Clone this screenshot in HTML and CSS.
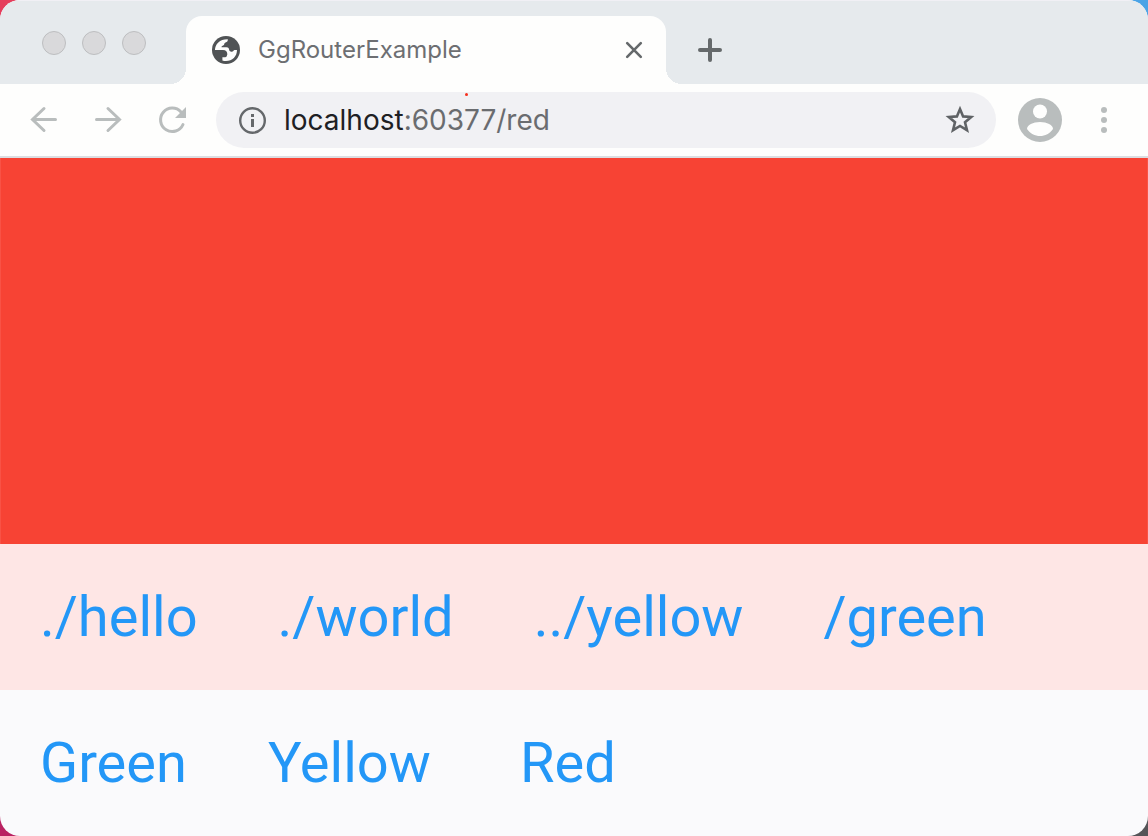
FILE: index.html
```html
<!DOCTYPE html>
<html lang="en">
<head>
<meta charset="utf-8">
<title>GgRouterExample</title>
<link rel="stylesheet" href="styles.css">
</head>
<body>
<div class="window">
  <header class="tabstrip">
    <div class="lights">
      <button class="light" aria-label="Close window"></button>
      <button class="light" aria-label="Minimize window"></button>
      <button class="light" aria-label="Zoom window"></button>
    </div>
    <div class="tab">
      <svg class="globe" viewBox="0 0 28 28" aria-hidden="true">
        <circle cx="14" cy="14" r="14" fill="#505355"/>
        <path fill="#fefefd" d="M3 14C3 8 8 3 15.800 3.200C16 5 15 6.200 13.500 6.400C12 6.600 12.600 8.500 11.500 9.300C10.300 10 9.500 10 9.500 11.200H14.500C16.500 11.200 17 12.500 17.200 14C17.500 15.500 19 16 20.500 15.500C21.500 15.200 21.500 14 22.500 14H25C25 20.500 20.300 25 14 25C12.700 25 11.500 24.800 10.400 24.400V21.200H13C14.800 21.200 15 19.500 15.300 18.500C15.500 16 14 14 11 14Z"/>
      </svg>
      <span class="title">GgRouterExample</span>
      <button class="icon-button close" aria-label="Close tab">
        <svg width="20" height="20" viewBox="0 0 20 20"><path d="M3.200 3.200L16.800 16.800M16.800 3.200L3.200 16.800" stroke="#65696b" stroke-width="2.600" stroke-linecap="round"/></svg>
      </button>
    </div>
    <button class="icon-button add" aria-label="New tab">
      <svg width="28" height="28" viewBox="0 0 28 28"><path d="M14 4V24M4 14H24" stroke="#65696b" stroke-width="4" stroke-linecap="round"/></svg>
    </button>
  </header>
  <div class="toolbar">
    <nav class="controls" aria-label="History">
      <button class="icon-button" aria-label="Back">
        <svg width="32" height="32" viewBox="0 0 32 32"><path d="M27.500 15.500H4.500M16 4.500L4.500 15.500L16 26.500" fill="none" stroke="#b9bdbd" stroke-width="3" stroke-linecap="round"/></svg>
      </button>
      <button class="icon-button" aria-label="Forward">
        <svg width="32" height="32" viewBox="0 0 32 32"><path d="M4.500 15.500H27.500M16 4.500L27.500 15.500L16 26.500" fill="none" stroke="#b9bdbd" stroke-width="3" stroke-linecap="round"/></svg>
      </button>
      <button class="icon-button" aria-label="Reload">
        <svg width="32" height="32" viewBox="0 0 32 32"><path d="M27 20.500A11.700 11.700 0 1 1 25 8" fill="none" stroke="#b9bdbd" stroke-width="3" stroke-linecap="round"/><path d="M30 3V14H19Z" fill="#b9bdbd"/></svg>
      </button>
    </nav>
    <div class="address">
      <svg width="28" height="28" viewBox="0 0 28 28" aria-hidden="true"><circle cx="14.500" cy="14.500" r="12.300" fill="none" stroke="#65686b" stroke-width="2.400"/><path d="M13 8H16V11H13ZM13 13H16V21H13Z" fill="#65686b"/></svg>
      <span class="url"><span class="host">localhost</span>:60377/red</span>
      <button class="icon-button star" aria-label="Bookmark this page">
        <svg width="32" height="32" viewBox="0 0 32 32"><path d="M16 5L19.100 12.400L27.200 13L21 18.300L23 26.200L16 22L9 26.200L11 18.300L4.800 13L12.900 12.400Z" fill="none" stroke="#5f6265" stroke-width="2.600"/></svg>
      </button>
      <i class="dot"></i>
    </div>
    <button class="icon-button profile" aria-label="Profile">
      <svg width="44" height="44" viewBox="0 0 44 44"><circle cx="22" cy="22" r="22" fill="#b9bdbd"/><circle cx="22" cy="13.500" r="7" fill="#fefefd"/><path d="M9 31C9 27 15 24 22 24S35 27 35 31C32 35.500 27 38 22 38S12 35.500 9 31Z" fill="#fefefd"/></svg>
    </button>
    <button class="icon-button menu" aria-label="Menu">
      <svg width="8" height="28" viewBox="0 0 8 28"><g fill="#b9bdbd"><circle cx="4" cy="4" r="3"/><circle cx="4" cy="14" r="3"/><circle cx="4" cy="24" r="3"/></g></svg>
    </button>
  </div>
  <main class="page"></main>
  <nav class="links relative" aria-label="Relative routes">
    <a href="#hello">./hello</a><a href="#world">./world</a><a href="#yellow">../yellow</a><a href="#green">/green</a>
  </nav>
  <nav class="links routes" aria-label="Main routes">
    <a href="#green">Green</a><a href="#yellow">Yellow</a><a href="#red">Red</a>
  </nav>
</div>
</body>
</html>
```
FILE: styles.css
```css
* { box-sizing: border-box; }

body {
  margin: 0;
  background:
    linear-gradient(90deg, #e53e5c 50%, #4aa3e6 50%) top / 100% 50% no-repeat,
    linear-gradient(90deg, #b92262 50%, #555558 50%) bottom / 100% 50% no-repeat;
}

.window {
  display: flex;
  flex-direction: column;
  min-height: 100vh;
  overflow: hidden;
  border-radius: 20px;
  background: #fafafc;
  font-family: Inter, "Liberation Sans", sans-serif;
}

button {
  margin: 0;
  padding: 0;
  border: 0;
  background: none;
}

svg { display: block; }

.icon-button {
  display: flex;
  flex: none;
  align-items: center;
  justify-content: center;
}

.tabstrip {
  display: flex;
  align-items: flex-end;
  height: 84px;
  border-top: 1px solid #f1f0f5;
  background: #e6eaed;
}

.lights {
  display: flex;
  flex: none;
  gap: 16px;
  width: 186px;
  padding: 0 0 29px 42px;
}

.light {
  width: 24px;
  height: 24px;
  border: 1px solid #bdbec0;
  border-radius: 50%;
  background: #d9d9db;
}

.tab {
  position: relative;
  display: flex;
  align-items: center;
  width: 480px;
  height: 68px;
  padding: 0 22px 0 26px;
  border-radius: 16px 16px 0 0;
  background: #fefefd;
}

.tab::before,
.tab::after {
  content: "";
  position: absolute;
  bottom: 0;
  width: 16px;
  height: 16px;
}

.tab::before {
  right: 100%;
  background: radial-gradient(circle at 0 0, transparent 16px, #fefefd 16px);
}

.tab::after {
  left: 100%;
  background: radial-gradient(circle at 100% 0, transparent 16px, #fefefd 16px);
}

.globe {
  flex: none;
  width: 28px;
  height: 28px;
}

.title {
  flex: 1;
  padding: 0 0 2px 18px;
  color: #6d6f72;
  font-size: 24px;
}

.add {
  height: 68px;
  margin-left: 30px;
}

.toolbar {
  display: flex;
  align-items: center;
  height: 74px;
  padding: 0 40px 0 28px;
  border-bottom: 2px solid #dcdde1;
  background: #fefefd;
}

.controls {
  display: flex;
  flex: none;
  gap: 32px;
  width: 188px;
}

.address {
  position: relative;
  display: flex;
  flex: 1;
  align-items: center;
  height: 56px;
  padding: 0 20px 0 22px;
  border-radius: 28px;
  background: #f1f1f4;
}

.url {
  flex: 1;
  padding-left: 18px;
  color: #6a6c6f;
  font-size: 28px;
}

.host { color: #1e2023; }

.dot {
  position: absolute;
  top: 1px;
  left: 249px;
  width: 3px;
  height: 3px;
  border-radius: 50%;
  background: #f62f1c;
}

.profile { margin-left: 22px; }
.menu { margin-left: 38px; }

.page {
  flex: 1;
  border: solid #f95245;
  border-width: 0 1px;
  background: #f74334;
}

.links {
  display: flex;
  flex-wrap: wrap;
  gap: 0 80px;
  padding: 40px;
  font-family: Roboto, sans-serif;
  font-size: 56px;
  line-height: 66px;
}

.links a {
  color: #2397f7;
  text-decoration: none;
}

.relative { background: #fee6e5; }

.routes {
  display: grid;
  grid-template-columns: 148px 172px auto;
  justify-content: start;
}
```
